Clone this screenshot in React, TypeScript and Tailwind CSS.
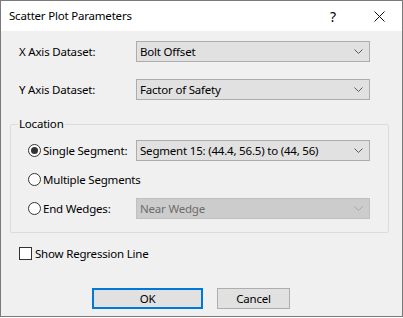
import React from "react";

const font = { fontFamily: '"Segoe UI", "Noto Sans", "Liberation Sans", sans-serif' };
const txt = "text-[11.5px] tracking-[-0.2px]";

function Chevron({ disabled }: { disabled?: boolean }) {
  return (
    <svg width="9" height="5" viewBox="0 0 9 5" className="shrink-0">
      <path d="M0.5 0.5 L4.5 4.5 L8.5 0.5" fill="none" stroke={disabled ? "#a6a6a6" : "#5a5a5a"} strokeWidth="1" />
    </svg>
  );
}

function Combo({ value, disabled }: { value: string; disabled?: boolean }) {
  return (
    <div
      className={
        "flex h-[21px] w-[234px] items-center justify-between border pl-[3px] pr-[6px] " +
        txt +
        (disabled ? " border-[#bfbfbf] bg-[#cccccc] text-[#6d6d6d]" : " border-[#adadad] bg-[#e1e1e1] text-black")
      }
    >
      <span className="leading-none">{value}</span>
      <Chevron disabled={disabled} />
    </div>
  );
}

function Radio({ checked, label, fixed }: { checked?: boolean; label: string; fixed?: boolean }) {
  return (
    <div className={"flex items-center gap-[2px] " + (fixed ? "w-[108px]" : "")}>
      <div className="flex h-[13px] w-[13px] shrink-0 items-center justify-center rounded-full border border-[#333333] bg-white">
        {checked && <div className="h-[7px] w-[7px] rounded-full bg-[#333333]" />}
      </div>
      <span className={"whitespace-nowrap leading-none text-black " + txt}>{label}</span>
    </div>
  );
}

export default function App() {
  return (
    <div className="h-[318px] w-[403px] bg-white" style={font}>
      <div className="flex h-[317px] w-[403px] flex-col border border-[#7a7a7a] bg-[#f0f0f0]">
        {/* title bar */}
        <div className="flex h-[30px] items-center bg-white pl-[8px]">
          <span className={"flex-1 text-black " + txt}>Scatter Plot Parameters</span>
          <span className="w-[46px] text-center text-[14px] text-black">?</span>
          <div className="flex w-[46px] items-center justify-center">
            <svg width="11" height="11" viewBox="0 0 11 11">
              <path d="M0.5 0.5 L10.5 10.5 M10.5 0.5 L0.5 10.5" stroke="#111" strokeWidth="1" fill="none" />
            </svg>
          </div>
        </div>

        {/* body */}
        <div className="flex flex-1 flex-col px-[9px] pt-[10px]">
          <div className="flex items-center">
            <span className={"w-[126px] pl-[9px] text-black " + txt}>X Axis Dataset:</span>
            <Combo value="Bolt Offset" />
          </div>
          <div className="mt-[17px] flex items-center">
            <span className={"w-[126px] pl-[9px] text-black " + txt}>Y Axis Dataset:</span>
            <Combo value="Factor of Safety" />
          </div>

          {/* group box */}
          <div className="relative mt-[24px] h-[109px] w-[379px] rounded-[2px] border border-[#dcdcdc]">
            <span className={"absolute left-[7px] top-[-9px] bg-[#f0f0f0] px-[1px] leading-[16px] text-black " + txt}>
              Location
            </span>
            <div className="flex flex-col pl-[17px] pt-[15px]">
              <div className="flex items-center">
                <Radio checked fixed label="Single Segment:" />
                <Combo value="Segment 15: (44.4, 56.5) to (44, 56)" />
              </div>
              <div className="mt-[8px] flex h-[21px] items-center">
                <Radio label="Multiple Segments" />
              </div>
              <div className="mt-[8px] flex items-center">
                <Radio fixed label="End Wedges:" />
                <Combo value="Near Wedge" disabled />
              </div>
            </div>
          </div>

          {/* checkbox */}
          <div className="mt-[12px] flex items-center gap-[3px] pl-[9px]">
            <div className="h-[13px] w-[13px] border border-[#333333] bg-white" />
            <span className={"text-black " + txt}>Show Regression Line</span>
          </div>

          {/* buttons */}
          <div className="mt-[26px] flex gap-[14px] pl-[82px]">
            <div className={"flex h-[21px] w-[111px] items-center justify-center border-2 border-[#0078d7] bg-[#e1e1e1] text-black " + txt}>
              OK
            </div>
            <div className={"flex h-[21px] w-[73px] items-center justify-center border border-[#adadad] bg-[#e1e1e1] text-black " + txt}>
              Cancel
            </div>
          </div>
        </div>
      </div>
    </div>
  );
}
